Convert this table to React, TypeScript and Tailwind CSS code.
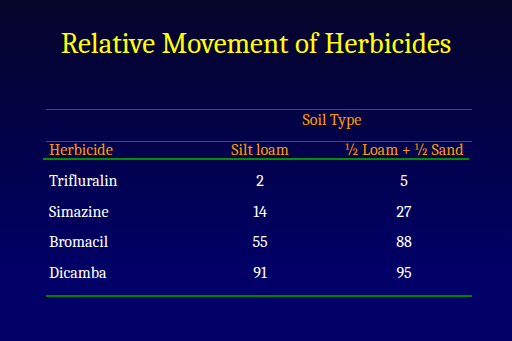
import React from "react";

const ROWS = [
  { name: "Trifluralin", silt: "2", mix: "5" },
  { name: "Simazine", silt: "14", mix: "27" },
  { name: "Bromacil", silt: "55", mix: "88" },
  { name: "Dicamba", silt: "91", mix: "95" },
];

export default function App() {
  return (
    <div className="font-serif w-[512px] h-[341px] overflow-hidden bg-[linear-gradient(to_bottom,#05042a_0%,#000066_78%)]">
      <h1 className="pt-[29px] text-center text-[29px] leading-[30px] text-[#ffff00]">
        Relative Movement of Herbicides
      </h1>

      <div className="mt-[50px] ml-[46px] w-[426px] text-[16px]">
        <div className="h-px bg-[#008000]" />

        {/* Soil type group heading */}
        <div className="grid h-[31px] grid-cols-[154px_272px] leading-[21px] text-[#ff9900]">
          <div />
          <div className="pr-2 text-center">Soil Type</div>
        </div>

        <div className="h-px bg-[#008000]" />

        {/* Column headers */}
        <div className="grid h-4 grid-cols-[154px_120px_152px] leading-[17px] text-[#ff9900]">
          <div className="pl-[3px]">Herbicide</div>
          <div className="text-center">Silt loam</div>
          <div className="pl-4 text-center whitespace-nowrap">½ Loam + ½ Sand</div>
        </div>
        <div className="-ml-[3px] h-[2px] w-[426px] bg-[#009000]" />

        {/* Data */}
        <div className="mt-[6px] text-white">
          {ROWS.map((r) => (
            <div key={r.name} className="grid grid-cols-[154px_120px_152px] leading-[30.5px]">
              <div className="pl-[3px]">{r.name}</div>
              <div className="text-center">{r.silt}</div>
              <div className="pl-4 text-center">{r.mix}</div>
            </div>
          ))}
        </div>

        <div className="mt-[7px] h-[2px] bg-[#008000]" />
      </div>
    </div>
  );
}
